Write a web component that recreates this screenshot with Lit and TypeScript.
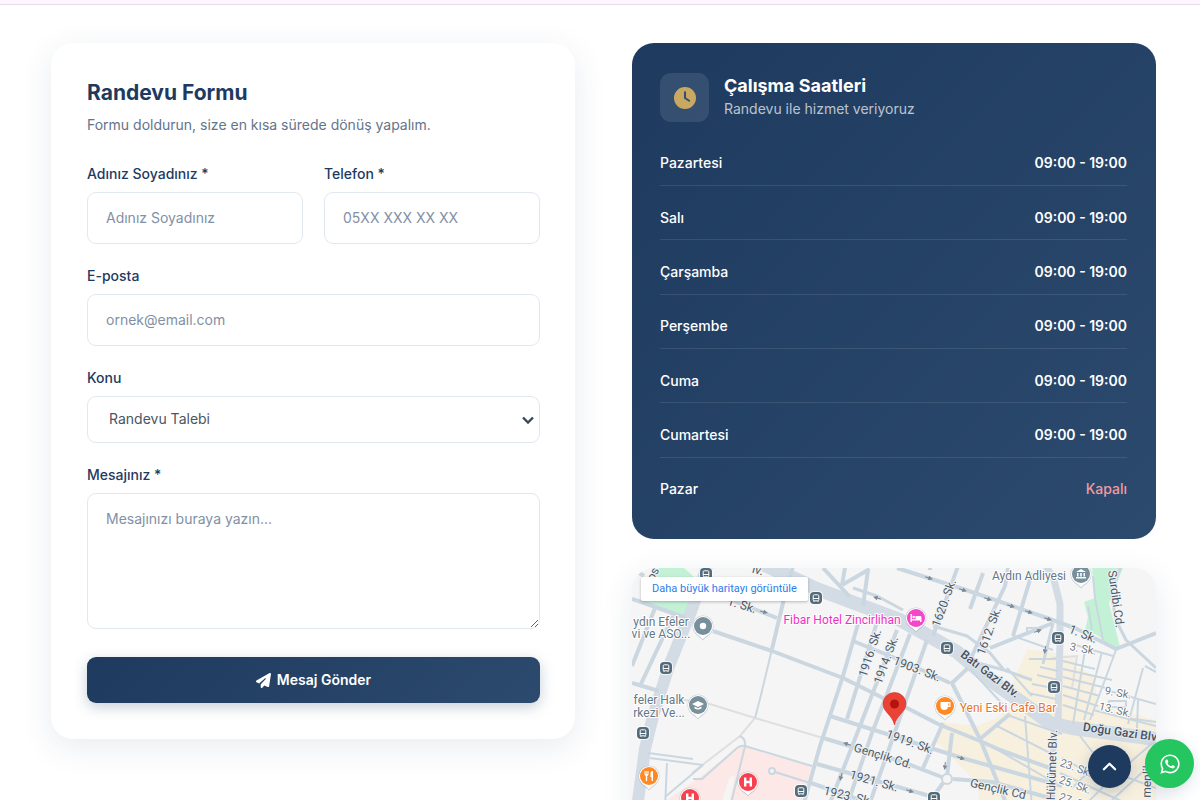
import { LitElement, html, svg, css } from "lit";
import { customElement } from "lit/decorators.js";

const WORK_HOURS: { day: string; hours: string; closed?: boolean }[] = [
  { day: "Pazartesi", hours: "09:00 - 19:00" },
  { day: "Salı", hours: "09:00 - 19:00" },
  { day: "Çarşamba", hours: "09:00 - 19:00" },
  { day: "Perşembe", hours: "09:00 - 19:00" },
  { day: "Cuma", hours: "09:00 - 19:00" },
  { day: "Cumartesi", hours: "09:00 - 19:00" },
  { day: "Pazar", hours: "Kapalı", closed: true },
];

/* ---------- Map data, in map units ---------- */

const BOULEVARDS = [
  { w: 12, d: "M75-2 60 41 37 98 21 148 13 181 5 240" },
  { w: 14, d: "M122-8 185 21 268 52 295 67 325 84 358 112 392 136 418 155 440 160 524 171" },
  { w: 7, d: "M413-4 422 12 428 36 428 72 426 156" },
  { w: 6, d: "M422 156 418 300" },
];

const ROADS = [
  { w: 4, d: "M81 63 140 83 211 110 251 130 275 140 306 156 348 173 368 182 418 200" },
  { w: 4, d: "M265 0 331 21 418 51 445 61 484 81 524 65" },
  { w: 4, d: "M172 235 188 178 211 108 226 56" },
  { w: 4, d: "M246 51 215 151M265 62 228 158 196 240M278 66 240 165 214 240M295 72 258 178 236 240" },
  { w: 4, d: "M221 73 268 92 318 115M198 148 261 168 330 190 430 218" },
  { w: 4, d: "M191 170 268 193 315 211M185 196 298 228M176 214 240 236" },
  { w: 4, d: "M161-2 151 35 140 81M81 25 145 50" },
  { w: 4, d: "M326-2 301 68M351 5 338 41M376 0 373 18 338 92M400 5 381 68M358 80 421 55" },
  { w: 4, d: "M336 100 320 115 348 171 376 240M348 171 378 146M311 155 291 200M320 165 315 208" },
  { w: 4, d: "M321 211 360 214 418 230M311 215 296 236M300 0 296 0" },
  { w: 4, d: "M191 0 218 29M210 17 236 2 231 38M213 0 210 17" },
  { w: 4, d: "M0 31 15 36 54 50M23 40 0 98M41 48 8 118M0 115 27 123M0 0 12 8" },
  { w: 3, d: "M489-2 479 25 484 52 494 72 524 100M421 55 411 96" },
  { w: 3, d: "M301 58 335 68 358 85 372 102 400 112M335 92 372 102M221 20 245 28 271 42" },
  { w: 2, d: "M140 81 128 131 123 150M108 168Q114 171 113 178" },
  { w: 2, d: "M61 211H70L105 180Q109 177 113 178L180 198M113 178 98 240M16 185 61 191M18 190 71 197M35 195 33 240M71 197 33 229" },
  { w: 2, d: "M143 204 178 215 211 225" },
  { w: 2, d: "M338 101 375 141M375 100 400 128M393 148 400 240M365 158 418 185M352 174 418 212M378 148 430 166" },
  { w: 2, d: "M397 91H424M408 99 426 103M405 107 426 112M400 116 426 121M396 125 424 131" },
  { w: 2, d: "M431 93 463 101M431 101 480 112M431 109 474 120M431 118 468 128M431 127 466 138M431 137 462 147" },
  { w: 2, d: "M453 82 441 156M484 82 458 152M470 84 452 152M440 76 481 88" },
  { w: 2, d: "M448 168 475 203M475 186 440 220M511 100 496 156M505 160 506 132M461 142 524 158M474 122 524 136M477 133H494V139H477Z" },
  { w: 2, d: "M461 8 463 30 471 72M456 38 460 62M515 200 480 232M524 172 480 210 450 240M430 190 470 212M428 205 500 238M470 200 524 220" },
  { w: 2, d: "M395 66V60H408M381 68 421 82M513 98 524 104M494 150 524 154" },
];

const FOOTPATHS = "M78 136 123 150 191 170M123 150 108 168 60 205M420 90 445 88 440 120M40 130 78 136";

type MapLabel = [text: string, x: number, y: number, turn: number, tone: string];

const MAP_LABELS: MapLabel[] = [
  ["Aydın Adliyesi", 397, 8, 0, "place"],
  ["ydın Efeler", 29, 54, 0, "place"],
  ["vi ve ASO...", 29, 66, 0, "place"],
  ["feler Halk", 27, 132, 0, "place"],
  ["rkezi Ve...", 27, 145, 0, "place"],
  ["Fibar Hotel Zincirlihan", 210, 52, 0, "hotel"],
  ["Yeni Eski Cafe Bar", 376, 140, 0, "food"],
  ["os", 21, 6, -65, "street"],
  ["lv.", 126, 2, 15, "street"],
  ["1. Sk.", 110, 37, 17, "street"],
  ["1620. Sk.", 312, 35, -70, "street"],
  ["1612. Sk.", 357, 63, -70, "street"],
  ["1916. Sk.", 238, 85, -72, "street"],
  ["1914. Sk.", 254, 92, -70, "street"],
  ["1903. Sk.", 285, 101, 21, "street"],
  ["Batı Gazi Blv.", 358, 106, 37, "main"],
  ["1. Sk.", 451, 66, 22, "street"],
  ["3. Sk.", 451, 81, 10, "minor"],
  ["9. Sk.", 486, 125, 10, "minor"],
  ["13. Sk.", 483, 142, 14, "minor"],
  ["Doğu Gazi Blv", 488, 164, 8, "main"],
  ["Hükümet Blv.", 420, 197, -88, "street"],
  ["23. Sk.", 444, 200, 20, "minor"],
  ["25. Sk.", 443, 217, 20, "minor"],
  ["27. Sk.", 443, 234, 20, "minor"],
  ["Gençlik Cd", 366, 221, 13, "street"],
  ["1919. Sk.", 278, 174, 20, "street"],
  ["Gençlik Cd.", 251, 188, 17, "street"],
  ["1921. Sk.", 242, 213, 16, "street"],
  ["1923. Sk.", 216, 228, 13, "street"],
  ["Surdibi Cd.", 484, 31, 82, "street"],
  ["menlik", 515, 212, -88, "street"],
];

const ONE_WAY: [number, number, number][] = [
  [132, 44, 15], [245, 30, 197], [297, 10, 18], [331, 22, 18], [356, 31, 18], [379, 38, 18],
  [397, 44, 18], [416, 51, 18], [406, 63, -20], [413, 82, 100], [215, 176, 197], [209, 209, 105],
  [278, 223, 17], [329, 190, 17], [313, 198, 95],
];

const STOPS: [number, number][] = [
  [74, 6], [184, 30], [34, 100], [11, 165], [315, 80], [426, 70], [422, 119], [169, 223], [302, 230],
];

const glyphs = {
  ring: svg`<circle r="3.2" fill="#fff" />`,
  school: svg`<path d="M-6-1 0-4 6-1 0 2ZM-3.5 1.500V3.500Q0 5.500 3.500 3.500V1.500L0 3.300Z" fill="#fff" />`,
  court: svg`<path d="M-5-2 0-5 5-2ZM-4-1H-2.500V2.500H-4ZM-.8-1H.8V2.500H-.8ZM2.500-1H4V2.500H2.500ZM-5 3H5V4.500H-5Z" fill="#fff" />`,
  bed: svg`<path d="M-5.500-4H-4V1H-.5V-2H4.500Q5.500-2 5.500 0V4H4V2.500H-4V4H-5.500Z" fill="#fff" /><circle cx="-2.300" cy="-1" r="1.300" fill="#fff" />`,
  cup: svg`<path d="M-4.500-4H5.500V1H3Q2.500 4-.8 4T-4.500 1ZM3.200-2.500V-.5H4.300V-2.500Z" fill="#fff" fill-rule="evenodd" />`,
  fork: svg`<path d="M-4.500-5V-2Q-4.500-.5-3.200 0V5H-1.800V0Q-.5-.5-.5-2V-5M1.500-3Q1.500-5 4-5V5H2.500V1H1.500Z" fill="#fff" /><path d="M-3.100-5V-2M-1.800-5V-2" stroke="#ff8a24" stroke-width=".6" />`,
  hospital: svg`<path d="M-4-4.500H-1.600V-1.200H1.600V-4.500H4V4.500H1.600V1.200H-1.600V4.500H-4Z" fill="#fff" />`,
};

const PINS: { x: number; y: number; fill: string; glyph: unknown }[] = [
  { x: 71, y: 58, fill: "#78909c", glyph: glyphs.ring },
  { x: 66, y: 137, fill: "#78909c", glyph: glyphs.school },
  { x: 449, y: 6, fill: "#78909c", glyph: glyphs.court },
  { x: 284, y: 50, fill: "#f545c8", glyph: glyphs.bed },
  { x: 313, y: 138, fill: "#ff8a24", glyph: glyphs.cup },
  { x: 17, y: 208, fill: "#ff8a24", glyph: glyphs.fork },
  { x: 116, y: 214, fill: "#f8414f", glyph: glyphs.hospital },
  { x: 58, y: 230, fill: "#f8414f", glyph: glyphs.hospital },
];

@customElement("city-map")
export class CityMap extends LitElement {
  static styles = css`
    :host {
      display: block;
      position: relative;
      overflow: hidden;
      border-radius: 22px;
      background: #f5f5f5;
      box-shadow: 0 8px 32px rgba(30, 58, 95, 0.1);
    }
    .canvas {
      display: block;
      width: 100%;
      height: 280px;
      font-family: Roboto, "Noto Sans", sans-serif;
    }
    .park { fill: #c3f1d5; }
    .commerce { fill: #f8f0de; }
    .clinic { fill: #fce8e6; }
    .boulevard { fill: none; stroke: #d3dce5; stroke-linejoin: round; }
    .road { fill: none; stroke: #cbd7e0; stroke-linejoin: round; }
    .path { fill: none; stroke: #dedfe0; stroke-width: 2; }
    .loop { fill: #f5f5f5; stroke: #cbd7e0; stroke-width: 2; }
    .arrow { fill: #7b8a96; stroke: #7b8a96; stroke-width: 1; }
    .label {
      font-size: 12px;
      text-anchor: middle;
      dominant-baseline: central;
      stroke: #fff;
      stroke-width: 2px;
      paint-order: stroke;
      stroke-linejoin: round;
    }
    .place { fill: #647887; }
    .hotel { fill: #f02fc2; }
    .food { fill: #e8742c; }
    .street { fill: #4c5966; stroke: #f0f3f5; }
    .main { fill: #46525f; font-weight: 500; stroke: #e3e9ee; }
    .minor { fill: #6f7b86; font-size: 11px; }
    .larger {
      position: absolute;
      top: 9px;
      left: 9px;
      padding: 0 11px;
      background: #fff;
      color: #2b7de9;
      font: 11px/24px Roboto, sans-serif;
      text-decoration: none;
      border-radius: 2px;
      box-shadow: 0 1px 3px rgba(0, 0, 0, 0.25);
    }
  `;

  render() {
    return html`
      <svg class="canvas" viewBox="0 0 524 280" preserveAspectRatio="xMinYMin slice" role="img" aria-label="Harita">
        <path class="park" d="M27 0H52L68 14 54 50 13 34ZM460 0H491L477 35 488 79 481 80 465 67 453 62 456 49 452 34 463 30ZM207 24 216 28 205 27Z" />
        <path class="commerce" d="M395 81 443 88 441 98 463 108 465 136 524 152V280H355L345 215 304 174 311 154 345 158 365 150 385 132 378 122Z" />
        <path class="clinic" d="M35 232 65 211 108 178 180 198 168 240H30Z" />
        <path fill="#f5f5f5" d="M97 210 103 207 96 240H88Z" />
        <path class="path" d=${FOOTPATHS} />
        ${BOULEVARDS.map((b) => svg`<path class="boulevard" stroke-width=${b.w} d=${b.d} />`)}
        ${ROADS.map((r) => svg`<path class="road" stroke-width=${r.w} d=${r.d} />`)}
        <circle class="loop" cx="315" cy="211" r="5" />
        <circle class="loop" cx="140" cy="203" r="3" />
        ${ONE_WAY.map(
          ([x, y, a]) => svg`<path class="arrow" transform="translate(${x} ${y}) rotate(${a})" d="M-4 0H0V-1.500L3 0 0 1.500V0Z" />`
        )}
        ${MAP_LABELS.map(
          ([text, x, y, a, tone]) => svg`<text class="label ${tone}" transform="translate(${x} ${y}) rotate(${a})">${text}</text>`
        )}
        ${STOPS.map(
          ([x, y]) => svg`<g transform="translate(${x} ${y})">
            <rect x="-7" y="-7" width="14" height="14" rx="4.500" fill="#fff" opacity=".7" />
            <rect x="-6" y="-6" width="12" height="12" rx="4" fill="#546b7c" />
            <rect x="-2.800" y="-3.200" width="5.600" height="6" rx="1" fill="none" stroke="#fff" />
            <path d="M-3 .5H3M-2 3V4M2 3V4" stroke="#fff" fill="none" />
          </g>`
        )}
        ${PINS.map(
          (p) => svg`<g transform="translate(${p.x} ${p.y})">
            <path d="M0 14.500C-2 11-10.500 9-10.500 0A10.500 10.500 0 0 1 10.500 0C10.500 9 2 11 0 14.500Z" fill="#8795a1" opacity=".45" />
            <path d="M0 13.500C-2 10-10 8-10 0A10 10 0 0 1 10 0C10 8 2 10 0 13.500Z" fill="#fff" />
            <circle r="9" fill=${p.fill} />${p.glyph}
          </g>`
        )}
        <g transform="translate(262.500 136)">
          <path d="M0 21C-2 11-11.500 8-11.500 0A11.500 11.500 0 0 1 11.500 0C11.500 8 2 11 0 21Z" fill="#ea4335" stroke="#c5372c" stroke-width=".6" />
          <circle r="4.500" fill="#b31412" />
        </g>
      </svg>
      <a class="larger" href="#harita">Daha büyük haritayı görüntüle</a>
    `;
  }
}

@customElement("app-root")
export class AppRoot extends LitElement {
  static styles = css`
    :host {
      display: block;
      background: #fff;
      color: #1e3a5f;
      font: 14px/20px Inter, "Noto Sans", sans-serif;
    }
    * { box-sizing: border-box; }
    h2, h3, p { margin: 0; }
    .strip {
      height: 5px;
      background: #fdf5ff;
      border-bottom: 1px solid #e8dcea;
    }
    .contact {
      display: grid;
      grid-template-columns: 1fr 1fr;
      align-items: start;
      gap: 57px;
      padding: 38px 44px 40px 51px;
    }
    .form-card {
      padding: 36px 35px 36px 36px;
      background: #fff;
      border-radius: 22px;
      box-shadow: 0 8px 32px rgba(30, 58, 95, 0.1);
    }
    .form-title { font-size: 21px; line-height: 28px; font-weight: 700; }
    .form-lead { margin: 8px 0 28px; color: #64748b; }
    .fields { display: grid; grid-template-columns: 1fr 1fr; gap: 21px; }
    .field { display: flex; flex-direction: column; gap: 8px; min-width: 0; }
    .wide { grid-column: 1 / -1; }
    .label { line-height: 21px; font-weight: 500; }
    .control {
      width: 100%;
      height: 52px;
      margin: 0;
      padding: 0 18px 2px;
      border: 1px solid #e2e8f0;
      border-radius: 9px;
      background: #fff;
      color: #4b5563;
      font: inherit;
      outline: none;
    }
    .control::placeholder { color: #8290a5; opacity: 1; }
    .control:focus { border-color: #1e3a5f; }
    .picker { display: grid; align-items: center; }
    .select {
      grid-area: 1 / 1;
      height: 47px;
      padding: 0 36px 2px 21px;
      appearance: none;
    }
    .picker-icon {
      grid-area: 1 / 1;
      justify-self: end;
      width: 12px;
      height: 8px;
      margin-right: 6px;
      pointer-events: none;
    }
    .message { display: block; height: 136px; padding: 15px 18px; resize: vertical; }
    .send {
      display: flex;
      align-items: center;
      justify-content: center;
      gap: 6px;
      width: 100%;
      height: 46px;
      margin-top: 28px;
      border: 0;
      border-radius: 9px;
      background: linear-gradient(135deg, #1e3a5f, #2c4a6e);
      box-shadow: 0 4px 14px rgba(30, 58, 95, 0.25);
      color: #fff;
      font: inherit;
      font-weight: 600;
      cursor: pointer;
    }
    .send-icon { width: 15px; height: 15px; fill: currentColor; }
    .side { display: flex; flex-direction: column; gap: 29px; min-width: 0; }
    .hours-card {
      padding: 30px 29px 27px 28px;
      border-radius: 22px;
      background: linear-gradient(135deg, #1e3a5f, #2c4a6e);
      color: #fff;
    }
    .hours-head { display: flex; align-items: flex-start; gap: 15px; margin-bottom: 10px; }
    .hours-badge {
      display: grid;
      place-items: center;
      width: 49px;
      height: 49px;
      border-radius: 11px;
      background: rgba(255, 255, 255, 0.1);
    }
    .hours-icon { width: 22px; height: 22px; fill: #c9a961; }
    .hours-title { font-size: 18px; line-height: 26px; font-weight: 700; }
    .hours-note { color: rgba(255, 255, 255, 0.7); }
    .hours { width: 100%; height: 380px; border-collapse: collapse; }
    .day, .time {
      padding: 10px 0 0;
      border-bottom: 1px solid rgba(255, 255, 255, 0.1);
      text-align: left;
      font-weight: 500;
    }
    .time { text-align: right; font-weight: 600; }
    .last .day, .last .time { border-bottom-color: transparent; }
    .last .closed { color: #f19a9f; font-weight: 500; }
    .fab {
      position: fixed;
      bottom: 12px;
      display: grid;
      place-items: center;
      padding: 0;
      border: 0;
      border-radius: 50%;
      cursor: pointer;
    }
    .to-top {
      right: 69px;
      width: 43px;
      height: 43px;
      background: #1e3a5f;
      box-shadow: 0 4px 14px rgba(30, 58, 95, 0.25);
    }
    .to-top-icon { width: 15px; height: 15px; }
    .whatsapp {
      right: 6px;
      width: 49px;
      height: 49px;
      background: #25c560;
      box-shadow: 0 4px 16px rgba(30, 58, 95, 0.15);
    }
    .whatsapp-icon { width: 20px; height: 22px; fill: #fff; }
  `;

  render() {
    return html`
      <div class="strip"></div>
      <main class="contact">
        <form class="form-card" @submit=${(e: Event) => e.preventDefault()}>
          <h2 class="form-title">Randevu Formu</h2>
          <p class="form-lead">Formu doldurun, size en kısa sürede dönüş yapalım.</p>
          <div class="fields">
            <div class="field">
              <label class="label" for="name">Adınız Soyadınız *</label>
              <input class="control" id="name" type="text" placeholder="Adınız Soyadınız" required />
            </div>
            <div class="field">
              <label class="label" for="phone">Telefon *</label>
              <input class="control" id="phone" type="tel" placeholder="05XX XXX XX XX" required />
            </div>
            <div class="field wide">
              <label class="label" for="email">E-posta</label>
              <input class="control" id="email" type="email" placeholder="ornek@email.com" />
            </div>
            <div class="field wide">
              <label class="label" for="subject">Konu</label>
              <div class="picker">
                <select class="control select" id="subject">
                  <option>Randevu Talebi</option>
                </select>
                <svg class="picker-icon" viewBox="0 0 12 8" aria-hidden="true">
                  <path d="M1 1.500 6 6.500 11 1.500" fill="none" stroke="#3b4859" stroke-width="2.400" />
                </svg>
              </div>
            </div>
            <div class="field wide">
              <label class="label" for="message">Mesajınız *</label>
              <textarea class="control message" id="message" placeholder="Mesajınızı buraya yazın..." required></textarea>
            </div>
          </div>
          <button class="send" type="submit">
            <svg class="send-icon" viewBox="0 0 512 512" aria-hidden="true">
              <path d="M498.1 5.6c10.1 7 15.4 19.1 13.5 31.2l-64 416c-1.5 9.7-7.4 18.2-16 23s-18.9 5.400-28 1.600L284 427.700l-68.500 74.100c-8.900 9.700-22.900 12.900-35.200 8.100S160 493.200 160 480V396.400c0-4 1.500-7.800 4.200-10.700L331.800 202.800c5.800-6.300 5.600-16-.4-22s-15.700-6.400-22-.7L106 360.800 17.700 316.600C7.100 311.300 .3 300.700 0 288.900s5.900-22.800 16.100-28.700l448-256c10.700-6.100 23.900-5.500 34 1.400z" />
            </svg>
            Mesaj Gönder
          </button>
        </form>

        <div class="side">
          <section class="hours-card">
            <header class="hours-head">
              <span class="hours-badge">
                <svg class="hours-icon" viewBox="0 0 512 512" aria-hidden="true">
                  <path d="M256 0a256 256 0 1 1 0 512A256 256 0 1 1 256 0zM232 120V256c0 8 4 15.500 10.700 20l96 64c11 7.400 25.900 4.400 33.300-6.700s4.400-25.900-6.700-33.300L280 243.200V120c0-13.300-10.700-24-24-24s-24 10.700-24 24z" />
                </svg>
              </span>
              <div>
                <h3 class="hours-title">Çalışma Saatleri</h3>
                <p class="hours-note">Randevu ile hizmet veriyoruz</p>
              </div>
            </header>
            <table class="hours">
              <tbody>
                ${WORK_HOURS.map(
                  (row) => html`<tr class=${row.closed ? "last" : ""}>
                    <th class="day" scope="row">${row.day}</th>
                    <td class="time ${row.closed ? "closed" : ""}">${row.hours}</td>
                  </tr>`
                )}
              </tbody>
            </table>
          </section>
          <city-map></city-map>
        </div>
      </main>

      <button class="fab to-top" type="button" aria-label="Yukarı çık">
        <svg class="to-top-icon" viewBox="0 0 16 16" aria-hidden="true">
          <path d="M2 11 8 5l6 6" fill="none" stroke="#fff" stroke-width="2.400" stroke-linecap="round" stroke-linejoin="round" />
        </svg>
      </button>
      <a class="fab whatsapp" href="#whatsapp" aria-label="WhatsApp">
        <svg class="whatsapp-icon" viewBox="0 0 448 512" aria-hidden="true">
          <path d="M380.900 97.100C339 55.100 283.200 32 223.900 32c-122.400 0-222 99.600-222 222 0 39.100 10.200 77.300 29.600 111L0 480l117.700-30.900c32.400 17.700 68.900 27 106.100 27h.1c122.300 0 224.100-99.600 224.100-222 0-59.300-25.200-115-67.100-157zm-157 341.600c-33.200 0-65.700-8.900-94-25.700l-6.700-4-69.800 18.300L72 359.200l-4.400-7c-18.500-29.400-28.200-63.300-28.200-98.200 0-101.700 82.800-184.500 184.600-184.500 49.300 0 95.600 19.200 130.400 54.100 34.800 34.900 56.200 81.200 56.100 130.500 0 101.800-84.900 184.600-186.600 184.600zm101.200-138.200c-5.500-2.800-32.800-16.200-37.900-18-5.100-1.900-8.800-2.800-12.500 2.800-3.700 5.600-14.300 18-17.600 21.800-3.200 3.700-6.500 4.200-12 1.400-32.600-16.300-54-29.100-75.500-66-5.700-9.800 5.700-9.100 16.300-30.300 1.800-3.700.9-6.900-.5-9.700-1.400-2.800-12.500-30.100-17.100-41.200-4.500-10.800-9.100-9.300-12.500-9.500-3.200-.2-6.900-.2-10.600-.2-3.700 0-9.700 1.400-14.800 6.900-5.100 5.600-19.400 19-19.400 46.300 0 27.300 19.900 53.700 22.600 57.400 2.800 3.700 39.100 59.700 94.800 83.800 35.200 15.200 49 16.500 66.600 13.900 10.700-1.600 32.800-13.400 37.400-26.400 4.600-13 4.600-24.100 3.200-26.400-1.300-2.500-5-3.900-10.500-6.600z" />
        </svg>
      </a>
    `;
  }
}
